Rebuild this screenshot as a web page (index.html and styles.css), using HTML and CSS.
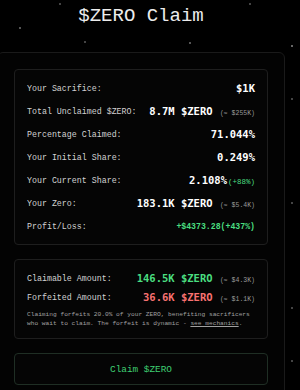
FILE: index.html
```html
<!DOCTYPE html>
<html lang="en">
<head>
    <meta charset="UTF-8">
    <meta name="viewport" content="width=device-width, initial-scale=1.0">
    <title>$ZERO Claim</title>
    <link rel="stylesheet" href="styles.css">
</head>
<body>
    <div class="page">
        <h1 class="title">$ZERO Claim</h1>

        <div class="panel">
            <!-- position summary -->
            <div class="card stats">
                <div class="row">
                    <span class="label">Your Sacrifice:</span>
                    <span class="value">$1K</span>
                </div>
                <div class="row">
                    <span class="label">Total Unclaimed $ZERO:</span>
                    <span class="value">8.7M $ZERO <small class="approx">(≈ $255K)</small></span>
                </div>
                <div class="row">
                    <span class="label">Percentage Claimed:</span>
                    <span class="value">71.044%</span>
                </div>
                <div class="row">
                    <span class="label">Your Initial Share:</span>
                    <span class="value">0.249%</span>
                </div>
                <div class="row">
                    <span class="label">Your Current Share:</span>
                    <span class="value">2.108%<small class="gain">(+88%)</small></span>
                </div>
                <div class="row">
                    <span class="label">Your Zero:</span>
                    <span class="value">183.1K $ZERO <small class="approx">(≈ $5.4K)</small></span>
                </div>
                <div class="row">
                    <span class="label">Profit/Loss:</span>
                    <span class="pnl">+$4373.28(+437%)</span>
                </div>
            </div>

            <!-- claim breakdown -->
            <div class="card amounts">
                <div class="row">
                    <span class="label">Claimable Amount:</span>
                    <span class="value green">146.5K $ZERO <small class="approx">(≈ $4.3K)</small></span>
                </div>
                <div class="row">
                    <span class="label">Forfeited Amount:</span>
                    <span class="value red">36.6K $ZERO <small class="approx">(≈ $1.1K)</small></span>
                </div>
                <p class="note">Claiming forfeits 20.0% of your ZERO, benefiting sacrificers who wait to claim. The forfeit is dynamic - <a href="#">see mechanics</a>.</p>
            </div>

            <button class="claim-btn">Claim $ZERO</button>
        </div>
    </div>
</body>
</html>
```

FILE: styles.css
```css
body {
    margin: 0;
    background-color: #000;
    background-image:
        radial-gradient(circle at 20px 28px, #555 0.8px, transparent 1.2px),
        radial-gradient(circle at 60px 4px, #444 0.8px, transparent 1.2px),
        radial-gradient(circle at 85px 42px, #444 0.8px, transparent 1.2px),
        radial-gradient(circle at 190px 43px, #555 0.8px, transparent 1.2px),
        radial-gradient(circle at 250px 4px, #444 0.8px, transparent 1.2px),
        radial-gradient(circle at 292px 46px, #666 0.8px, transparent 1.2px),
        radial-gradient(circle at 292px 99px, #444 0.8px, transparent 1.2px),
        radial-gradient(circle at 292px 203px, #444 0.8px, transparent 1.2px),
        radial-gradient(circle at 292px 308px, #444 0.8px, transparent 1.2px),
        radial-gradient(circle at 292px 361px, #444 0.8px, transparent 1.2px);
    background-repeat: no-repeat;
    color: #d4d4d4;
    font-family: "Liberation Mono", "DejaVu Sans Mono", monospace;
    overflow: hidden;
}
.page {
    width: 288px;
    margin-left: -3px;
}
.title {
    margin: 4px 0 0;
    font-size: 19px;
    line-height: 24px;
    font-weight: normal;
    text-align: center;
    color: #ececec;
}
.panel {
    margin-top: 24px;
    padding: 16px 16px 20px;
    border: 1px solid #1a1a1a;
    border-radius: 6px;
    background-color: #030303;
    display: flex;
    flex-direction: column;
    gap: 14px;
}
.card {
    border: 1px solid #1e1e1e;
    border-radius: 4px;
    background-color: #050505;
    padding: 10px 12px;
    display: flex;
    flex-direction: column;
}
.stats {
    gap: 7px;
}
.amounts {
    gap: 3px;
}
.row {
    display: flex;
    justify-content: space-between;
    align-items: center;
    height: 16px;
}
.label {
    font-size: 8.3px;
    color: #d2d2d2;
    white-space: nowrap;
}
.value {
    font-family: "DejaVu Sans Mono", monospace;
    font-weight: bold;
    font-size: 10.5px;
    color: #fff;
    white-space: nowrap;
}
.value.green {
    color: #4ade80;
}
.value.red {
    color: #f87171;
}
.approx {
    font-family: "Liberation Mono", monospace;
    font-weight: normal;
    font-size: 6.5px;
    color: #9a9a9a;
    margin-left: 1px;
}
.gain {
    font-family: "Liberation Mono", monospace;
    font-weight: normal;
    font-size: 7.5px;
    color: #4ade80;
    margin-left: 1px;
}
.pnl {
    font-size: 8.2px;
    font-weight: bold;
    color: #4ade80;
}
.note {
    margin: 2px 0 0;
    font-size: 6.2px;
    line-height: 9px;
    color: #a0a0a0;
}
.note a {
    color: #a0a0a0;
    text-decoration: underline;
}
.claim-btn {
    height: 32px;
    border: 1px solid #1f2e24;
    border-radius: 4px;
    background-color: #050505;
    color: #3fcf72;
    font-family: "Liberation Mono", monospace;
    font-size: 9.4px;
    cursor: pointer;
}
```
